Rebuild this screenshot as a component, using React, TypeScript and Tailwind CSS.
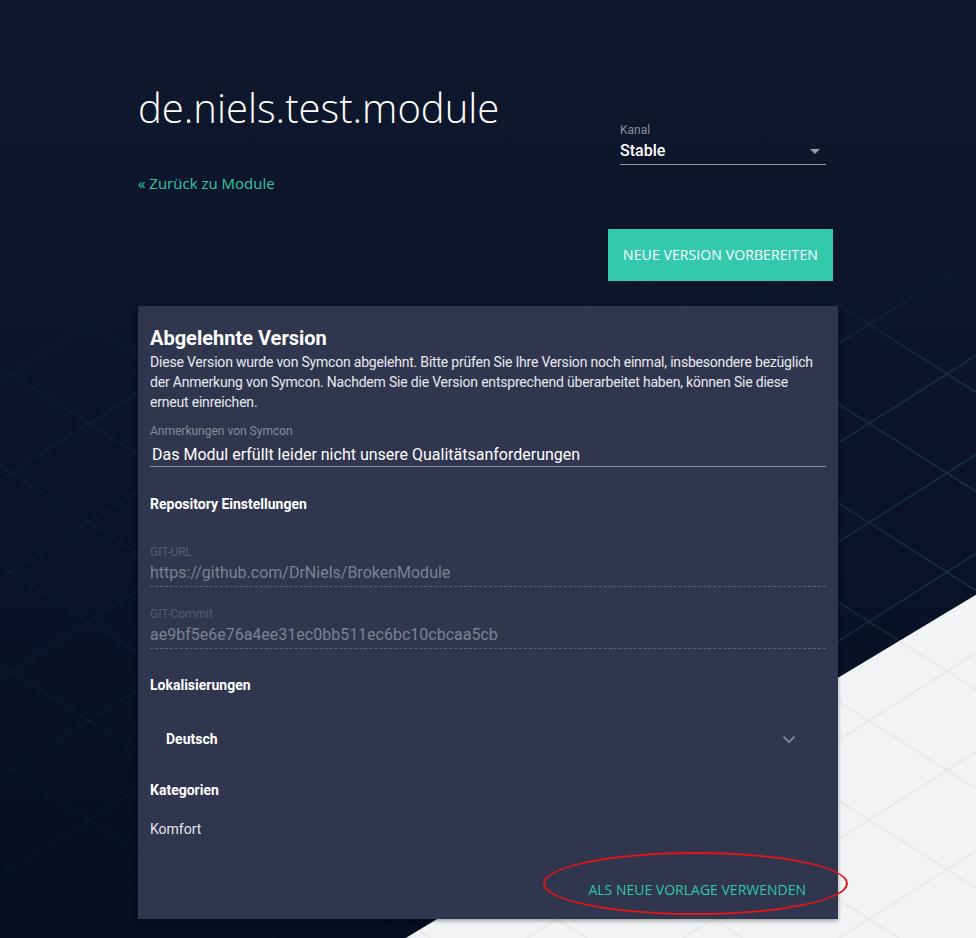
import React from 'react';

const ubuntu = "font-['Open_Sans',sans-serif]";
const roboto = "font-['Roboto',sans-serif]";

// diamond grid behind the page
const Backdrop: React.FC = () => (
  <svg className="absolute inset-0 h-full w-full" viewBox="0 0 976 938" preserveAspectRatio="none">
    <defs>
      <linearGradient id="bg" x1="0" y1="0" x2="0" y2="1">
        <stop offset="0" stopColor="#10182e" />
        <stop offset="1" stopColor="#060e22" />
      </linearGradient>
      <pattern id="gridDark" patternUnits="userSpaceOnUse" x="89" y="27" width="156" height="99">
        <path d="M0 0L156 99M0 99L156 0" stroke="#1a3a47" strokeWidth="1.4" fill="none" />
      </pattern>
      <pattern id="gridLight" patternUnits="userSpaceOnUse" x="89" y="27" width="156" height="99">
        <path d="M0 0L156 99M0 99L156 0" stroke="#e4e5e1" strokeWidth="1.2" fill="none" />
      </pattern>
      <linearGradient id="fadeX" x1="0" y1="0" x2="1" y2="0">
        <stop offset="0" stopColor="#fff" stopOpacity="0.3" />
        <stop offset="0.6" stopColor="#fff" stopOpacity="0.45" />
        <stop offset="1" stopColor="#fff" stopOpacity="1" />
      </linearGradient>
      <linearGradient id="fadeY" x1="0" y1="0" x2="0" y2="1">
        <stop offset="0.26" stopColor="#fff" stopOpacity="0" />
        <stop offset="0.42" stopColor="#fff" stopOpacity="1" />
        <stop offset="0.85" stopColor="#fff" stopOpacity="0.8" />
        <stop offset="1" stopColor="#fff" stopOpacity="0.2" />
      </linearGradient>
      <mask id="mx">
        <rect width="976" height="938" fill="url(#fadeX)" />
      </mask>
      <mask id="my">
        <rect width="976" height="938" fill="url(#fadeY)" />
      </mask>
      <clipPath id="wedge">
        <polygon points="976,594 976,938 404,938" />
      </clipPath>
    </defs>
    <rect width="976" height="938" fill="url(#bg)" />
    <g mask="url(#my)">
      <rect width="976" height="938" fill="url(#gridDark)" mask="url(#mx)" />
    </g>
    <polygon points="976,594 976,938 404,938" fill="#f2f3f5" />
    <rect width="976" height="938" fill="url(#gridLight)" clipPath="url(#wedge)" />
  </svg>
);

const Field: React.FC<{ label: string; value: string; className?: string }> = ({ label, value, className }) => (
  <div className={className}>
    <div className="text-[12px] leading-4 text-[#575c72]">{label}</div>
    <div className="mt-[1px] border-b border-dashed border-[#5c6175] pb-[1px] text-[16px] leading-6 text-[#7c8195]">{value}</div>
  </div>
);

export default function App() {
  return (
    <div className={`relative min-h-[938px] overflow-hidden ${roboto}`}>
      <Backdrop />

      <div className="relative mx-auto w-[700px] pb-5">
        {/* header */}
        <div className="flex justify-between">
          <div className="pt-[84px]">
            <h1 className={`${ubuntu} text-[40px] font-light leading-[48px] text-white`}>de.niels.test.module</h1>
            <a className={`${ubuntu} mt-[41px] block text-[15px] leading-5 text-[#2fc6a6]`}>« Zurück zu Module</a>
          </div>

          <div className="mr-3 w-[206px] pt-[121px]">
            <div className="text-[12px] leading-[18px] text-[#8c909a]">Kanal</div>
            <div className="flex items-center justify-between border-b border-[#9a9ca3] pb-[1px]">
              <span className="text-[16px] font-medium leading-6 text-white">Stable</span>
              <span className="mr-[6px] h-0 w-0 border-x-[5px] border-t-[5px] border-x-transparent border-t-[#9a9ca3]" />
            </div>
          </div>
        </div>

        <div className="mt-[36px] flex justify-end pr-[5px]">
          <button className={`${ubuntu} h-[52px] w-[225px] bg-[#33c9ac] pb-[2px] text-[14px] tracking-[0.1px] text-white`}>
            NEUE VERSION VORBEREITEN
          </button>
        </div>

        {/* card */}
        <div className="relative mt-[25px] bg-[#30364e] px-3 pb-[12px] pt-[18px] shadow-[0_2px_4px_rgba(0,0,0,0.35)]">
          <h2 className="text-[20px] font-bold leading-7 text-white">Abgelehnte Version</h2>
          <p className="text-[14px] leading-5 tracking-[-0.2px] text-[#e8e9ee]">
            Diese Version wurde von Symcon abgelehnt. Bitte prüfen Sie Ihre Version noch einmal, insbesondere bezüglich
            der Anmerkung von Symcon. Nachdem Sie die Version entsprechend überarbeitet haben, können Sie diese erneut
            einreichen.
          </p>

          <div className="mt-[11px]">
            <div className="text-[12px] leading-4 text-[#878b9c]">Anmerkungen von Symcon</div>
            <div className="mt-1 border-b border-[#8c8f9c] pl-[2px] text-[16px] leading-[23px] text-white">
              Das Modul erfüllt leider nicht unsere Qualitätsanforderungen
            </div>
          </div>

          <h3 className="mt-[27px] text-[14px] font-bold leading-5 text-white">Repository Einstellungen</h3>
          <Field className="mt-[30px]" label="GIT-URL" value="https://github.com/DrNiels/BrokenModule" />
          <Field className="mt-[19px]" label="GIT-Commit" value="ae9bf5e6e76a4ee31ec0bb511ec6bc10cbcaa5cb" />

          <h3 className="mt-[26px] text-[14px] font-bold leading-5 text-white">Lokalisierungen</h3>
          <div className="mt-5 flex h-12 items-center justify-between pl-4 pr-[30px]">
            <span className="text-[14px] font-bold text-white">Deutsch</span>
            <svg width="14" height="9" viewBox="0 0 14 9" fill="none">
              <path d="M1.5 1.5L7 7L12.5 1.5" stroke="#8e92a2" strokeWidth="1.6" />
            </svg>
          </div>

          <h3 className="mt-[17px] text-[14px] font-bold leading-5 text-white">Kategorien</h3>
          <div className="mt-[19px] text-[14px] leading-5 text-[#e4e5ea]">Komfort</div>

          <div className="mt-[32px] flex justify-end pr-1">
            <button className={`${ubuntu} h-9 px-4 text-[14px] text-[#2fc6a6]`}>ALS NEUE VORLAGE VERWENDEN</button>
          </div>

          {/* hand-drawn highlight */}
          <div className="pointer-events-none absolute left-[405px] top-[546px] h-[63px] w-[305px] rounded-[50%] border-2 border-[#e3151c]" />
        </div>
      </div>
    </div>
  );
}
